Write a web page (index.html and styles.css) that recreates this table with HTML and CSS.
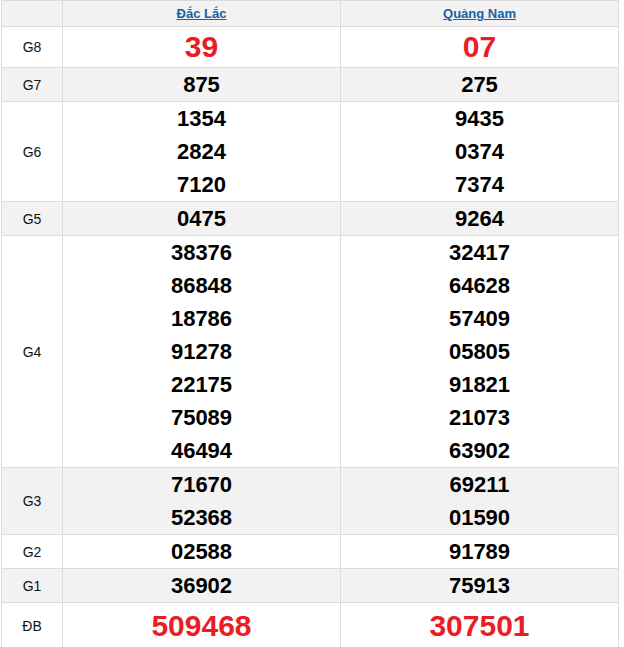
FILE: index.html
```html
<!DOCTYPE html>
<html lang="vi">
<head>
<meta charset="utf-8">
<title>Kết quả xổ số</title>
<link rel="stylesheet" href="styles.css">
</head>
<body>
<table class="kq">
  <colgroup><col class="c-label"><col class="c-prov"><col class="c-prov"></colgroup>
  <thead>
    <tr class="grey">
      <th></th>
      <th><a href="#">Đắc Lắc</a></th>
      <th><a href="#">Quảng Nam</a></th>
    </tr>
  </thead>
  <tbody>
    <tr class="g8">
      <td class="lbl">G8</td>
      <td class="num red big">39</td>
      <td class="num red big">07</td>
    </tr>
    <tr class="grey">
      <td class="lbl">G7</td>
      <td class="num">875</td>
      <td class="num">275</td>
    </tr>
    <tr>
      <td class="lbl">G6</td>
      <td class="num"><div>1354</div><div>2824</div><div>7120</div></td>
      <td class="num"><div>9435</div><div>0374</div><div>7374</div></td>
    </tr>
    <tr class="grey">
      <td class="lbl">G5</td>
      <td class="num">0475</td>
      <td class="num">9264</td>
    </tr>
    <tr>
      <td class="lbl">G4</td>
      <td class="num"><div>38376</div><div>86848</div><div>18786</div><div>91278</div><div>22175</div><div>75089</div><div>46494</div></td>
      <td class="num"><div>32417</div><div>64628</div><div>57409</div><div>05805</div><div>91821</div><div>21073</div><div>63902</div></td>
    </tr>
    <tr class="grey">
      <td class="lbl">G3</td>
      <td class="num"><div>71670</div><div>52368</div></td>
      <td class="num"><div>69211</div><div>01590</div></td>
    </tr>
    <tr>
      <td class="lbl">G2</td>
      <td class="num">02588</td>
      <td class="num">91789</td>
    </tr>
    <tr class="grey">
      <td class="lbl">G1</td>
      <td class="num">36902</td>
      <td class="num">75913</td>
    </tr>
    <tr class="db">
      <td class="lbl">ĐB</td>
      <td class="num red huge">509468</td>
      <td class="num red huge">307501</td>
    </tr>
  </tbody>
</table>
</body>
</html>
```
FILE: styles.css
```css
html, body {
  margin: 0;
  padding: 0;
  background: #fff;
}
body {
  padding-left: 1px;
  font-family: "Liberation Sans", Arial, sans-serif;
  color: #000;
}
.kq {
  border-collapse: collapse;
  width: 618px;
  table-layout: fixed;
}
.c-label { width: 61px; }
.kq th, .kq td {
  border: 1px solid #dcdcdc;
  padding: 0;
  text-align: center;
  vertical-align: middle;
}
.kq th {
  height: 25px;
  line-height: 25px;
  font-size: 13px;
  font-weight: bold;
}
.kq th a {
  color: #1560a8;
  text-decoration: underline;
}
.grey { background: #f2f2f2; }
.lbl {
  font-size: 14px;
  color: #111;
}
.num {
  font-size: 22px;
  font-weight: bold;
  line-height: 33px;
}
.red { color: #ec1c24; }
.big {
  font-size: 30px;
  line-height: 40px;
}
.huge {
  font-size: 30px;
  line-height: 45px;
}
```
